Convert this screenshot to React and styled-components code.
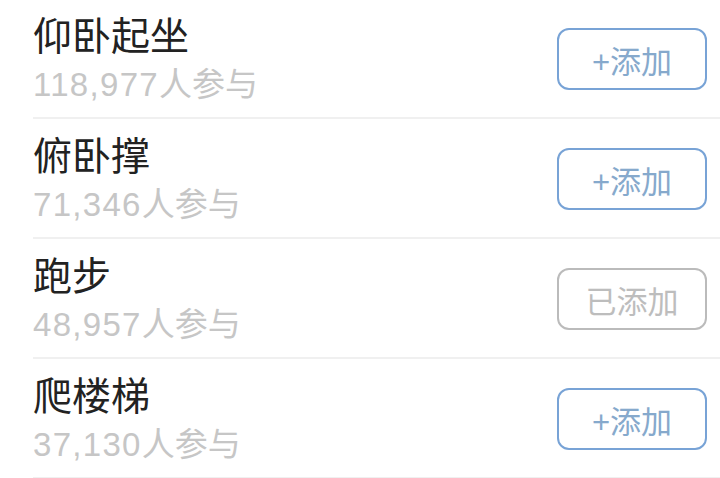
import React from "react";
import styled, { createGlobalStyle } from "styled-components";

const Global = createGlobalStyle`
  html, body { margin: 0; padding: 0; background: #fff; }
  body { font-family: "Liberation Sans", "Noto Sans CJK SC", sans-serif; }
`;

const List = styled.div`
  width: 720px;
  padding-left: 33px;
  box-sizing: border-box;
  margin-top: -1px;
`;

const Row = styled.div`
  display: flex;
  align-items: center;
  justify-content: space-between;
  height: 118px;
  padding-right: 13px;
  border-bottom: 2px solid #f0f0f0;
`;

const Info = styled.div`
  display: flex;
  flex-direction: column;
`;

const Title = styled.div`
  font-family: "Noto Sans CJK SC", sans-serif;
  font-size: 39px;
  line-height: 44px;
  color: #222;
`;

const Sub = styled.div`
  font-size: 33px;
  line-height: 40px;
  color: #c6c6c6;
  margin-top: 10px;
`;

const Count = styled.span`
  letter-spacing: 1.3px;
`;

const AddButton = styled.div`
  width: 150px;
  height: 62px;
  margin-top: 2px;
  box-sizing: border-box;
  border: 2px solid ${(p) => (p.$added ? "#bbbbbb" : "#78a3d6")};
  border-radius: 12px;
  display: flex;
  align-items: center;
  justify-content: center;
  font-family: "Liberation Sans", "Noto Sans CJK SC", sans-serif;
  font-size: 31px;
  color: ${(p) => (p.$added ? "#bdbdbd" : "#86a9cc")};
`;

const items = [
  { name: "仰卧起坐", count: "118,977", added: false },
  { name: "俯卧撑", count: "71,346", added: false },
  { name: "跑步", count: "48,957", added: true },
  { name: "爬楼梯", count: "37,130", added: false },
];

export default function App() {
  return (
    <>
      <Global />
      <List>
        {items.map((it) => (
          <Row key={it.name}>
            <Info>
              <Title>{it.name}</Title>
              <Sub>
                <Count>{it.count}</Count>人参与
              </Sub>
            </Info>
            <AddButton $added={it.added}>{it.added ? "已添加" : "+添加"}</AddButton>
          </Row>
        ))}
      </List>
    </>
  );
}
